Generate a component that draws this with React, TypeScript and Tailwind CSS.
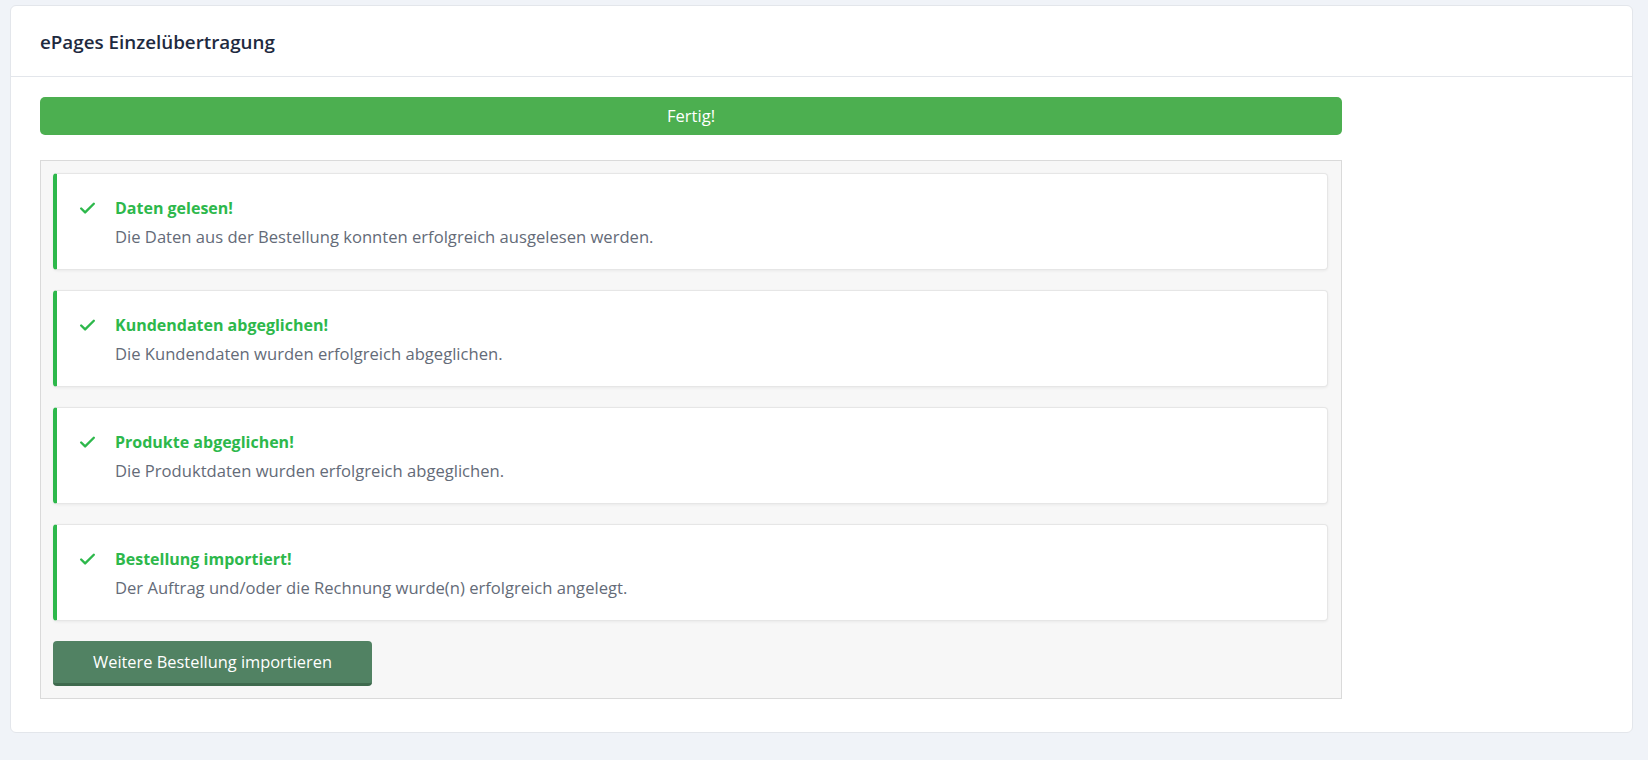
import { Check } from "lucide-react"

const STEPS = [
  {
    title: "Daten gelesen!",
    text: "Die Daten aus der Bestellung konnten erfolgreich ausgelesen werden.",
  },
  {
    title: "Kundendaten abgeglichen!",
    text: "Die Kundendaten wurden erfolgreich abgeglichen.",
  },
  {
    title: "Produkte abgeglichen!",
    text: "Die Produktdaten wurden erfolgreich abgeglichen.",
  },
  {
    title: "Bestellung importiert!",
    text: "Der Auftrag und/oder die Rechnung wurde(n) erfolgreich angelegt.",
  },
]

function StepCard({ title, text }: { title: string; text: string }) {
  return (
    <div className="flex h-[97px] rounded-[4px] border border-[#e6e6e6] border-l-4 border-l-[#2db84b] bg-white shadow-[0_1px_3px_rgba(0,0,0,0.06)]">
      <div className="w-[58px] shrink-0 pl-[21px] pt-[25px]">
        <Check size={19} strokeWidth={3} className="text-[#2db84b]" />
      </div>
      <div className="pt-[22px]">
        <div className="text-[16px] leading-6 font-bold text-[#2db84b]">{title}</div>
        <div className="mt-[5px] text-[16.6px] leading-6 text-[#646b78]">{text}</div>
      </div>
    </div>
  )
}

export default function App() {
  return (
    <div className="min-h-[760px] bg-[#f0f3f8] pt-[5px] pl-[10px] pr-[15px] font-['Open_Sans',sans-serif]">
      <div className="rounded-[6px] border border-[#e3e6eb] bg-white">
        {/* Header */}
        <div className="flex h-[71px] items-center border-b border-[#e3e6eb] px-[29px] pt-[3px]">
          <h1 className="text-[18.8px] font-semibold text-[#1e2a3f]">ePages Einzelübertragung</h1>
        </div>

        {/* Body */}
        <div className="px-[29px] pt-[20px] pb-[33px]">
          <div className="w-[1302px]">
            <div className="flex h-[38px] items-center justify-center rounded-[5px] bg-[#4caf50] text-[16.6px] text-white">
              Fertig!
            </div>

            <div className="mt-[25px] border border-[#dadada] bg-[#f7f7f7] p-[12px] pr-[13px]">
              <div className="flex flex-col gap-[20px]">
                {STEPS.map((s) => (
                  <StepCard key={s.title} title={s.title} text={s.text} />
                ))}
              </div>
              <button className="mt-[20px] h-[45px] w-[319px] rounded-[4px] border-b-[3px] border-[#3f6a4e] bg-[#518263] text-[16.4px] text-white">
                Weitere Bestellung importieren
              </button>
            </div>
          </div>
        </div>
      </div>
    </div>
  )
}
